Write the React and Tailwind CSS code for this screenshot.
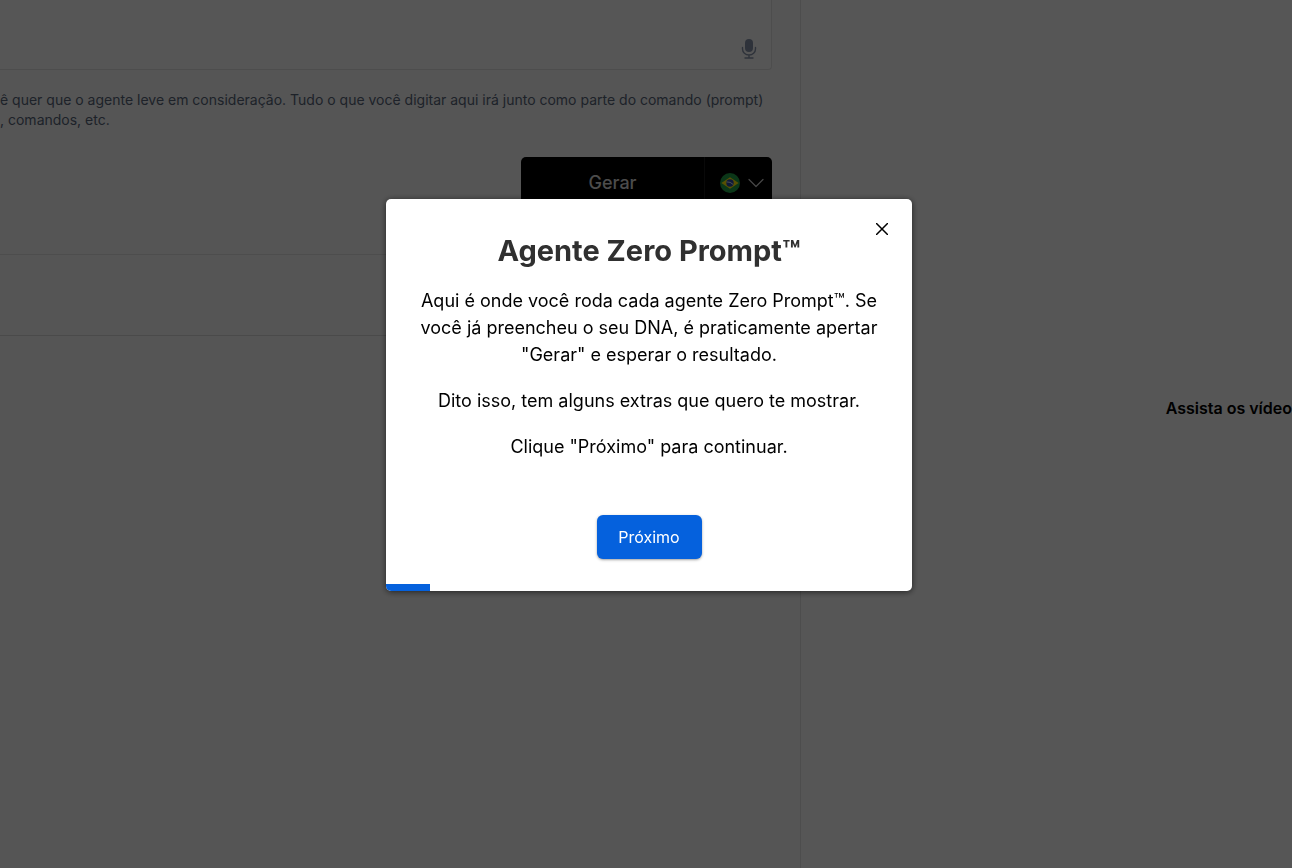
import { useState } from 'react';

const STEPS = 12;

function MicIcon() {
  return (
    <svg className="w-5 h-5" viewBox="0 0 20 20" fill="none" aria-hidden="true">
      <rect x="6" y="0" width="8" height="13" rx="4" fill="#8490a6" />
      <path d="M3.5 8.5v1.5a6.5 6 0 0 0 13 0V8.5M10 16v3M6 19h8" stroke="#8490a6" strokeWidth="1.4" strokeLinecap="round" />
    </svg>
  );
}

function BrazilFlag() {
  return (
    <svg className="w-5 h-5" viewBox="0 0 20 20" aria-hidden="true">
      <circle cx="10" cy="10" r="10" fill="#229e45" />
      <path d="M10 4.2L18.6 10L10 15.8L1.4 10Z" fill="#f8e509" />
      <circle cx="10" cy="10" r="3.7" fill="#2b49a3" />
      <path d="M6.6 8.9Q10.5 8.6 13.2 11.5" fill="none" stroke="#fff" strokeWidth="0.8" />
    </svg>
  );
}

function AgentPanel() {
  return (
    <main className="w-[62%] shrink-0 min-h-screen border-r border-[#dcdcdc] bg-[#f3f3f3]">
      <section className="border-b border-[#dddddd] pb-[45px]">
        <div className="mr-7 flex h-[70px] rounded-br-sm border-b border-r border-[#dddddd] bg-[#f7f7f7]">
          <textarea aria-label="Informações adicionais" className="flex-1 resize-none bg-transparent outline-none" />
          <button type="button" aria-label="Ditar" className="self-end px-3 pb-2.5">
            <MicIcon />
          </button>
        </div>
        <p className="mt-5 whitespace-nowrap text-sm leading-5 text-[#566377]">
          ê quer que o agente leve em consideração. Tudo o que você digitar aqui irá junto como parte do comando (prompt)
          <br />, comandos, etc.
        </p>
        <div className="mt-[27px] mr-7 ml-auto flex h-[52px] w-[251px] overflow-hidden rounded-[5px] bg-black text-white">
          <button type="button" className="flex-1 border-r border-[#1a1a1a] text-lg font-medium text-[#d9d9d9]">
            Gerar
          </button>
          <button type="button" aria-label="Idioma: português" className="flex w-[67px] items-center justify-center gap-2 pl-1.5">
            <BrazilFlag />
            <svg className="w-4 h-4" viewBox="0 0 16 16" fill="none" stroke="#cccccc" strokeWidth="1.2" aria-hidden="true">
              <path d="M1 4.5l7 7 7-7" strokeLinecap="round" strokeLinejoin="round" />
            </svg>
          </button>
        </div>
      </section>
      <div className="h-[81px] border-b border-[#d5d5d5] bg-[#f3f3f3]" />
    </main>
  );
}

function TourModal({ step, onNext, onClose }) {
  return (
    <div className="fixed inset-0 flex items-start justify-center bg-black/65 pt-[199px] pl-1.5">
      <div
        role="dialog"
        aria-labelledby="tour-title"
        className="relative w-[526px] max-w-full overflow-hidden rounded-[5px] bg-white px-8 pt-8 pb-8 text-center shadow-[0_1px_6px_rgba(0,0,0,0.6)]"
      >
        <button type="button" aria-label="Fechar" onClick={onClose} className="absolute top-5 right-5 p-1 text-black">
          <svg className="w-3 h-3" viewBox="0 0 12 12" fill="none" stroke="currentColor" strokeWidth="1.5" strokeLinecap="round" aria-hidden="true">
            <path d="M0.3 0.3L11.7 11.7M11.7 0.3L0.3 11.7" />
          </svg>
        </button>

        <h1 id="tour-title" className="text-[29px] leading-10 font-bold text-[#303030]">Agente Zero Prompt™</h1>
        <div className="mt-4 space-y-[19px] text-lg leading-[27px] text-black">
          <p>
            Aqui é onde você roda cada agente Zero Prompt™. Se você já preencheu o seu DNA, é praticamente apertar
            "Gerar" e esperar o resultado.
          </p>
          <p>Dito isso, tem alguns extras que quero te mostrar.</p>
          <p>Clique "Próximo" para continuar.</p>
        </div>
        <button
          type="button"
          onClick={onNext}
          className="mt-[55px] h-11 w-[105px] rounded-md bg-[#0561dd] text-base text-white shadow-sm shadow-black/30"
        >
          Próximo
        </button>

        {/* progress through the tour */}
        <div className="absolute bottom-0 left-0 h-[7px] bg-[#0561dd]" style={{ width: `${(step / STEPS) * 100}%` }} />
      </div>
    </div>
  );
}

export default function App() {
  const [step, setStep] = useState(1);
  const [open, setOpen] = useState(true);

  return (
    <div className="flex min-h-screen bg-[#f5f5f5] font-['Inter',sans-serif]">
      <AgentPanel />
      <aside className="flex-1">
        <h2 className="mt-[396px] text-right text-base leading-6 font-semibold text-black">Assista os vídeo</h2>
      </aside>
      {open && (
        <TourModal step={step} onNext={() => setStep(Math.min(step + 1, STEPS))} onClose={() => setOpen(false)} />
      )}
    </div>
  );
}
